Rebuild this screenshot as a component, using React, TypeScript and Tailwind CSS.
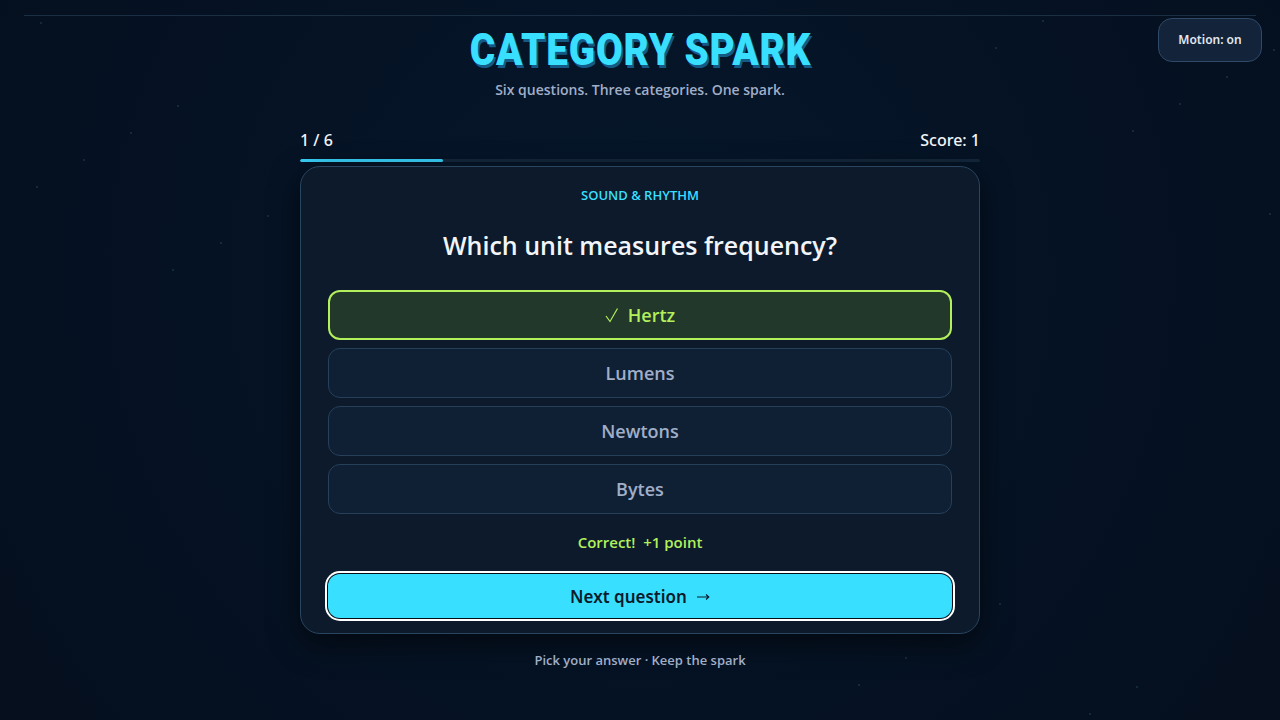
const stars: [number, number][] = [
  [41, 23], [178, 106], [131, 133], [84, 160], [37, 187], [268, 216], [221, 243], [173, 270],
  [1043, 21], [996, 48], [1274, 50], [1227, 77], [1180, 104], [1133, 131], [1270, 214], [1000, 604],
  [906, 658], [859, 685], [1137, 687], [1090, 714],
]

const options = ['Lumens', 'Newtons', 'Bytes']

export default function App() {
  return (
    <div className="relative min-h-[720px] overflow-hidden bg-[radial-gradient(circle_at_50%_38%,#06172b_0%,#051325_45%,#050f1e_100%)] pt-[15px] font-['Open_Sans',sans-serif] text-[#f1f5f9]">
      {stars.map(([x, y]) => (
        <span
          key={`${x}-${y}`}
          className="absolute h-0.5 w-0.5 bg-[#15293d]"
          style={{ left: x - 1, top: y - 1 }}
        />
      ))}

      <button className="absolute right-[18px] top-[18px] h-[44px] w-[104px] rounded-[14px] border border-[#2e4a68] bg-[#13233a] font-['Noto_Sans',sans-serif] text-xs font-semibold text-[#e2e8f0]">
        Motion: on
      </button>

      <div className="relative mx-auto w-[1232px] border-t border-[#1a2e44] pt-[8px]">
        <h1 className="text-center font-['Roboto',sans-serif] text-[45px] font-black uppercase leading-[52px] tracking-[1px] text-[#38dfff] [text-shadow:2px_3px_0_#155a86]">
          <span className="inline-block scale-x-[0.86]">Category Spark</span>
        </h1>
        <p className="mt-[4px] text-center text-sm font-semibold leading-[20px] text-[#a0aec8]">
          Six questions. Three categories. One spark.
        </p>

        <div className="mx-auto mt-[29px] w-[680px]">
          <div className="flex items-center justify-between font-['Noto_Sans',sans-serif] text-base font-medium leading-[22px]">
            <span>1 / 6</span>
            <span>Score: 1</span>
          </div>
          <div className="mt-[8px] h-[3px] overflow-hidden rounded-full bg-[#13263a]">
            <div className="h-full w-[143px] rounded-full bg-[#38cdf5]" />
          </div>

          <div className="mt-[4px] h-[468px] rounded-[20px] border border-[#2a4560] bg-[#0c1a2b] px-[27px] pt-[19px] shadow-[0_10px_30px_rgba(0,0,0,0.55)]">
            <p className="text-center text-[13px] font-semibold uppercase leading-[18px] text-[#38dfff]">
              Sound &amp; Rhythm
            </p>
            <h2 className="mt-[23px] text-center text-[25px] font-semibold leading-[36px] text-[#f1f5f9]">
              Which unit measures frequency?
            </h2>

            <div className="mt-[27px] flex flex-col gap-2">
              <button className="flex h-[50px] items-center justify-center gap-[9px] rounded-[12px] border-2 border-[#b2f05c] bg-[#21382a] text-lg font-semibold text-[#b2f05c]">
                <svg width="14" height="16" viewBox="0 0 14 16" fill="none" stroke="currentColor" strokeWidth="1.2">
                  <path d="M1 9 L5 14.5 L12.5 1.5" />
                </svg>
                Hertz
              </button>
              {options.map((option) => (
                <button
                  key={option}
                  className="h-[50px] rounded-[12px] border border-[#26405a] bg-[#0f2035] text-lg font-semibold text-[#a0aec8]"
                >
                  {option}
                </button>
              ))}
            </div>

            <p className="mt-[18px] text-center text-[15px] font-semibold leading-[20px] text-[#b2f05c]">
              Correct!&nbsp; +1 point
            </p>

            <button className="mt-[22px] flex h-[44px] w-full items-center justify-center gap-[9px] rounded-[12px] bg-[#38dfff] pt-0.5 font-['Noto_Sans',sans-serif] text-[17px] font-semibold text-[#0c1a2b] shadow-[0_0_0_1px_#060c16,0_0_0_3px_#ffffff]">
              Next question
              <svg width="14" height="10" viewBox="0 0 14 10" fill="none" stroke="currentColor" strokeWidth="1.1">
                <path d="M1 5 H12.5 M10 2.5 L12.8 5 L10 7.5" />
              </svg>
            </button>
          </div>

          <p className="mt-[16px] text-center text-[13px] font-semibold leading-[20px] text-[#a0aec8]">
            Pick your answer · Keep the spark
          </p>
        </div>
      </div>
    </div>
  )
}
